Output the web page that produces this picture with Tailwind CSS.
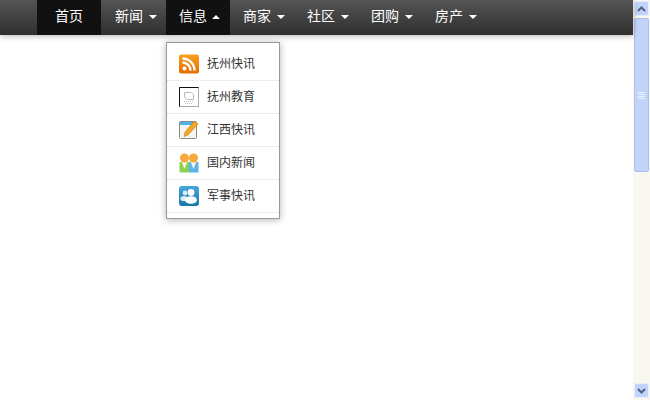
<!DOCTYPE html>
<html lang="zh">
<head>
    <meta charset="UTF-8">
    <title>导航菜单</title>
    <script src="https://cdn.jsdelivr.net/npm/@tailwindcss/browser@4"></script>
</head>
<body class="bg-white overflow-hidden font-['Liberation_Sans','Noto_Sans_CJK_SC',sans-serif]">
<div class="flex w-[650px] h-[400px]">
    <!-- page -->
    <div class="relative w-[633px] h-full">
        <nav class="flex h-[35px] pl-[37px] bg-gradient-to-b from-[#555555] to-[#2f2f2f] shadow-[0_1px_6px_rgba(0,0,0,0.3)] text-white text-[14px] leading-[33px]">
            <a class="w-[64px] text-center bg-[#111111]">首页</a>
            <a class="flex items-start w-[65px] pl-[14px] gap-[6px]">新闻<span class="mt-[15px] border-x-[4px] border-t-[4px] border-x-transparent border-t-white"></span></a>
            <a class="flex items-start w-[64px] pl-[13px] gap-[5px] bg-[#111111]">信息<span class="mt-[15px] border-x-[4px] border-b-[4px] border-x-transparent border-b-white"></span></a>
            <a class="flex items-start w-[64px] pl-[13px] gap-[6px]">商家<span class="mt-[15px] border-x-[4px] border-t-[4px] border-x-transparent border-t-white"></span></a>
            <a class="flex items-start w-[64px] pl-[13px] gap-[6px]">社区<span class="mt-[15px] border-x-[4px] border-t-[4px] border-x-transparent border-t-white"></span></a>
            <a class="flex items-start w-[64px] pl-[13px] gap-[6px]">团购<span class="mt-[15px] border-x-[4px] border-t-[4px] border-x-transparent border-t-white"></span></a>
            <a class="flex items-start w-[64px] pl-[13px] gap-[6px]">房产<span class="mt-[15px] border-x-[4px] border-t-[4px] border-x-transparent border-t-white"></span></a>
        </nav>

        <!-- dropdown -->
        <ul class="absolute left-[166px] top-[42px] w-[114px] h-[177px] pt-[5px] bg-white border border-[#999999] shadow-[0_1px_7px_rgba(0,0,0,0.3)] text-[12px] text-[#333333]">
            <li class="flex items-center h-[33px] pl-[12px] gap-[8px] border-b border-dotted border-[#dddddd]">
                <svg width="20" height="20" viewBox="0 0 20 20">
                    <defs><linearGradient id="rss" x1="0" y1="0" x2="0" y2="1"><stop offset="0" stop-color="#f9a021"/><stop offset="1" stop-color="#e56f00"/></linearGradient></defs>
                    <rect width="20" height="19" y="0.5" rx="2" fill="url(#rss)"/>
                    <circle cx="5.5" cy="14.5" r="2" fill="#fff"/>
                    <path d="M3.5 8.5a8 8 0 0 1 8 8M3.5 4.5a12 12 0 0 1 12 12" fill="none" stroke="#fff" stroke-width="2.4"/>
                </svg>
                <span>抚州快讯</span>
            </li>
            <li class="flex items-center h-[33px] pl-[12px] gap-[8px] border-b border-dotted border-[#dddddd]">
                <svg width="20" height="20" viewBox="0 0 20 20">
                    <rect x="0.5" y="0.5" width="19" height="19" fill="#fff" stroke="#aaaaaa"/>
                    <path d="M0.5 19.5V0.5H19.5" fill="none" stroke="#111111"/>
                    <path d="M5.5 5.5h7l2 2v5h-6l-3-2z" fill="none" stroke="#bbbbbb"/>
                    <path d="M5 14.5h10M6 16.5h8" fill="none" stroke="#bbbbbb" stroke-dasharray="1 1"/>
                </svg>
                <span>抚州教育</span>
            </li>
            <li class="flex items-center h-[33px] pl-[12px] gap-[8px] border-b border-dotted border-[#dddddd]">
                <svg width="20" height="20" viewBox="0 0 20 20">
                    <rect x="0.5" y="1.5" width="17" height="17" rx="1" fill="#f4f4f0" stroke="#8a8a8a"/>
                    <rect x="1" y="2" width="16" height="3" fill="#4db2e6"/>
                    <path d="M6 12L15.5 1l3.5 3L9 15l-4 1.5z" fill="#f5a623" stroke="#c77a10" stroke-width="0.6"/>
                </svg>
                <span>江西快讯</span>
            </li>
            <li class="flex items-center h-[33px] pl-[12px] gap-[8px] border-b border-dotted border-[#dddddd]">
                <svg width="20" height="20" viewBox="0 0 20 20">
                    <rect x="0.5" y="9" width="9.5" height="10.5" fill="#8fd14f"/>
                    <rect x="10" y="9" width="9.5" height="10.5" fill="#5fb4ea"/>
                    <path d="M1.5 6l4 10 4-10zM10.5 6l4 10 4-10z" fill="#f7f5e6"/>
                    <circle cx="5.5" cy="5" r="4.5" fill="#f5a93a"/>
                    <circle cx="14.5" cy="5" r="4.5" fill="#f5a93a"/>
                </svg>
                <span>国内新闻</span>
            </li>
            <li class="flex items-center h-[33px] pl-[12px] gap-[8px] border-b border-dotted border-[#dddddd]">
                <svg width="20" height="20" viewBox="0 0 20 20">
                    <defs><linearGradient id="ppl" x1="0" y1="0" x2="0" y2="1"><stop offset="0" stop-color="#45a8d8"/><stop offset="1" stop-color="#1b76a8"/></linearGradient></defs>
                    <rect width="20" height="20" rx="3" fill="url(#ppl)"/>
                    <circle cx="6" cy="7" r="2.4" fill="#d5edf8"/>
                    <ellipse cx="5" cy="12.5" rx="3.6" ry="2.6" fill="#d5edf8"/>
                    <circle cx="12" cy="6.5" r="3.4" fill="#fff"/>
                    <ellipse cx="12" cy="14" rx="6" ry="3.8" fill="#fff"/>
                </svg>
                <span>军事快讯</span>
            </li>
        </ul>
    </div>

    <!-- scrollbar -->
    <div class="flex flex-col w-[17px] h-full bg-[#f8f7f0] p-px pb-[2px]">
        <div class="flex items-center justify-center h-[15px] shrink-0 rounded-[2px] bg-[#c3d4fb] border border-[#e6eefe]">
            <svg width="9" height="6" viewBox="0 0 9 6"><path d="M1 5l3.5-3.5L8 5" fill="none" stroke="#4d6185" stroke-width="2"/></svg>
        </div>
        <div class="flex items-center justify-center h-[154px] mt-[2px] shrink-0 rounded-[2px] bg-[#c3d4fb] border border-[#a9c0f0]">
            <div class="flex flex-col gap-px w-[7px]">
                <span class="h-px bg-[#eef3fe]"></span>
                <span class="h-px bg-[#eef3fe]"></span>
                <span class="h-px bg-[#eef3fe]"></span>
                <span class="h-px bg-[#eef3fe]"></span>
            </div>
        </div>
        <div class="flex-1"></div>
        <div class="flex items-center justify-center h-[15px] shrink-0 rounded-[2px] bg-[#c3d4fb] border border-[#e6eefe]">
            <svg width="9" height="6" viewBox="0 0 9 6"><path d="M1 1l3.5 3.5L8 1" fill="none" stroke="#4d6185" stroke-width="2"/></svg>
        </div>
    </div>
</div>
</body>
</html>
